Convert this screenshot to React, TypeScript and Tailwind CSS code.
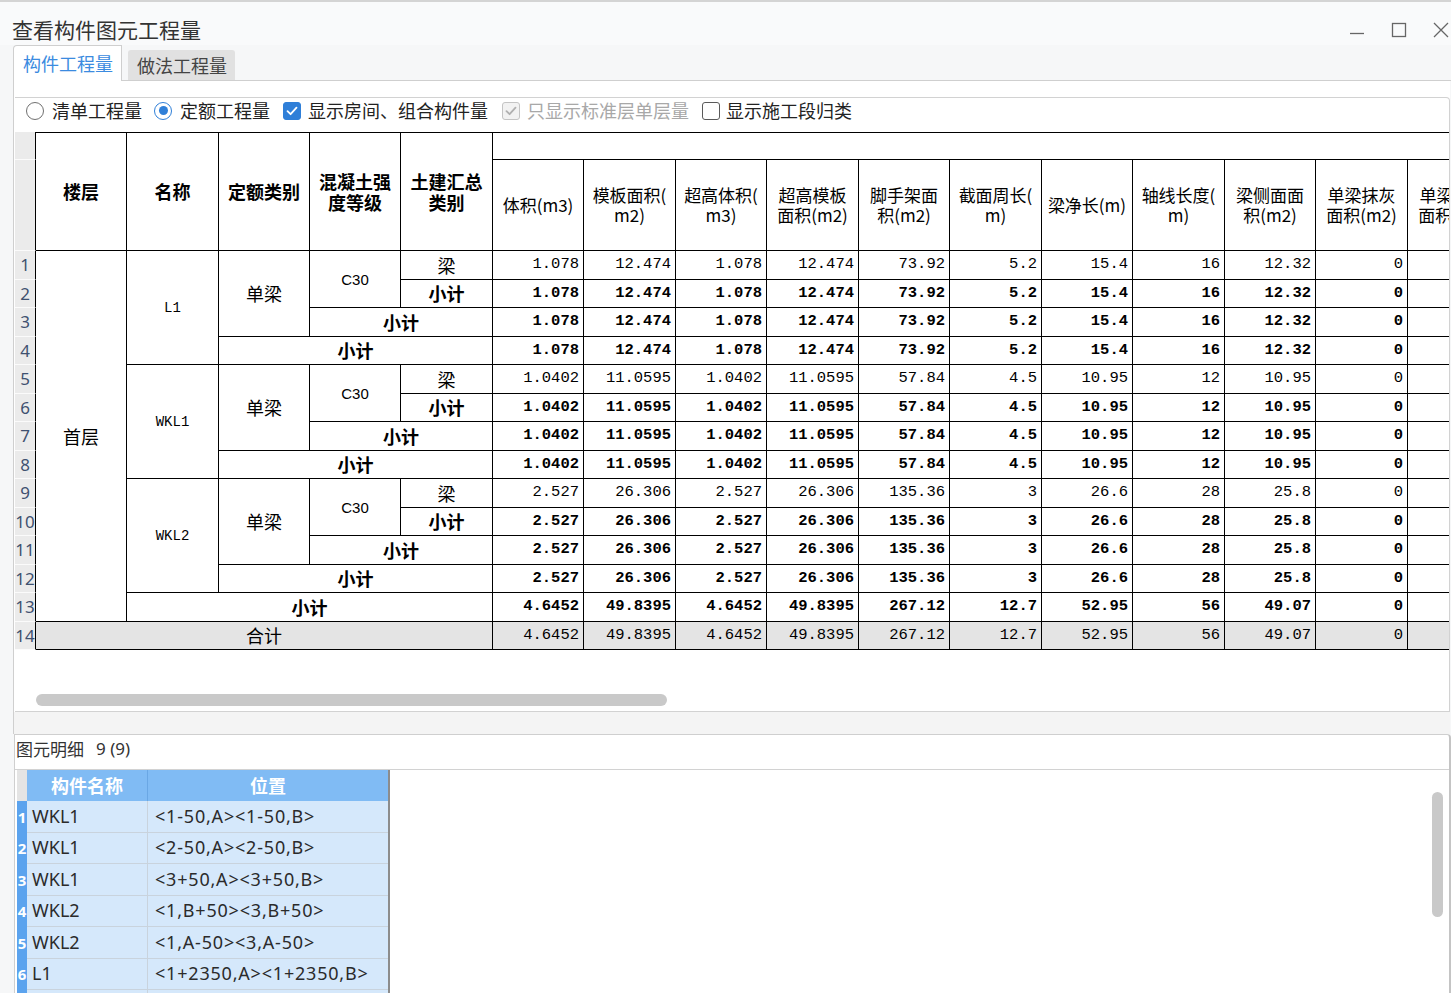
import React from 'react';

type Group = { name: string; vals: string[] };

const groups: Group[] = [
  { name: 'L1', vals: ['1.078', '12.474', '1.078', '12.474', '73.92', '5.2', '15.4', '16', '12.32', '0'] },
  { name: 'WKL1', vals: ['1.0402', '11.0595', '1.0402', '11.0595', '57.84', '4.5', '10.95', '12', '10.95', '0'] },
  { name: 'WKL2', vals: ['2.527', '26.306', '2.527', '26.306', '135.36', '3', '26.6', '28', '25.8', '0'] },
];
const total = ['4.6452', '49.8395', '4.6452', '49.8395', '267.12', '12.7', '52.95', '56', '49.07', '0'];

const colW = [
  'w-[21px]', 'w-[91px]', 'w-[92px]', 'w-[91px]', 'w-[91px]', 'w-[92px]', 'w-[91px]', 'w-[92px]', 'w-[91px]',
  'w-[92px]', 'w-[91px]', 'w-[92px]', 'w-[91px]', 'w-[92px]', 'w-[91px]', 'w-[92px]', 'w-[92px]',
];

const qtyHeaders: string[][] = [
  ['体积(m3)'],
  ['模板面积(', 'm2)'],
  ['超高体积(', 'm3)'],
  ['超高模板', '面积(m2)'],
  ['脚手架面', '积(m2)'],
  ['截面周长(', 'm)'],
  ['梁净长(m)'],
  ['轴线长度(', 'm)'],
  ['梁侧面面', '积(m2)'],
  ['单梁抹灰', '面积(m2)'],
  ['单梁模板', '面积(m2)'],
];

const details = [
  ['WKL1', '<1-50,A><1-50,B>'],
  ['WKL1', '<2-50,A><2-50,B>'],
  ['WKL1', '<3+50,A><3+50,B>'],
  ['WKL2', '<1,B+50><3,B+50>'],
  ['WKL2', '<1,A-50><3,A-50>'],
  ['L1', '<1+2350,A><1+2350,B>'],
  ['L1', '<2+2350,A><2+2350,B>'],
  ['KL1', '<1,A><1,B>'],
  ['KL1', '<3,A><3,B>'],
];

const cell = 'border-r border-b border-black p-0 text-center align-middle';
const rowHead =
  "bg-[#ebebeb] border-r border-r-black border-b border-b-[#fbfbfb] p-0 text-center align-middle text-[17px] text-[#3f5170] font-['Noto_Sans',sans-serif]";
const numCls = "border-r border-b border-black p-0 pr-[4px] text-right align-middle font-['Liberation_Mono',monospace] text-[15.5px]";
const xj = 'font-bold text-[18px]';

function Nums({ vals, bold }: { vals: string[]; bold?: boolean }) {
  return (
    <>
      {vals.map((v, i) => (
        <td key={i} className={`${numCls} ${bold ? 'font-bold' : ''}`}>
          {v}
        </td>
      ))}
      <td className={numCls}></td>
    </>
  );
}

function Radio({ checked }: { checked?: boolean }) {
  return (
    <span
      className={`flex h-[18px] w-[18px] items-center justify-center rounded-full border bg-white ${
        checked ? 'border-[#2f7fd8]' : 'border-[#707070]'
      }`}
    >
      {checked && <span className="h-[9px] w-[9px] rounded-full bg-[#2f7fd8]" />}
    </span>
  );
}

function Check({ state }: { state: 'on' | 'off' | 'disabled' }) {
  const box =
    state === 'on'
      ? 'bg-[#2f7fd8] border-[#2f7fd8]'
      : state === 'disabled'
      ? 'bg-[#f2f2f2] border-[#c4c4c4]'
      : 'bg-white border-[#5a5a5a]';
  return (
    <span className={`flex h-[18px] w-[18px] items-center justify-center rounded-[3px] border ${box}`}>
      {state !== 'off' && (
        <svg width="14" height="14" viewBox="0 0 14 14" fill="none">
          <path
            d="M2.5 7.2 L5.6 10.2 L11.5 3.6"
            stroke={state === 'on' ? '#ffffff' : '#b0b0b0'}
            strokeWidth="1.8"
            strokeLinecap="round"
            strokeLinejoin="round"
          />
        </svg>
      )}
    </span>
  );
}

export default function App() {
  return (
    <div className="relative h-[993px] w-[1451px] overflow-hidden border-t-2 border-[#d4d4d4] bg-[#f6f7f8] font-['Noto_Sans_CJK_SC',sans-serif] text-[#222]">
      {/* title bar */}
      <div className="flex h-[43px] items-center justify-between bg-[#f9fafb] pl-[12px] pr-[2px] pt-[12px]">
        <span className="text-[21px] leading-none text-[#333]">查看构件图元工程量</span>
        <div className="flex items-center gap-[26px] text-[#555]">
          <svg width="16" height="16" viewBox="0 0 16 16">
            <path d="M1 11.5 H15" stroke="#666" strokeWidth="1.3" />
          </svg>
          <svg width="16" height="16" viewBox="0 0 16 16">
            <rect x="1.5" y="1.5" width="13" height="13" fill="none" stroke="#666" strokeWidth="1.3" />
          </svg>
          <svg width="16" height="16" viewBox="0 0 16 16">
            <path d="M1 1 L15 15 M15 1 L1 15" stroke="#666" strokeWidth="1.3" />
          </svg>
        </div>
      </div>

      {/* tabs */}
      <div className="flex h-[36px] items-end pl-[13px]">
        <div className="flex h-[36px] w-[109px] items-center rounded-tl-[4px] border border-b-0 border-[#cfcfcf] bg-white pl-[9px] text-[18px] text-[#3b8be0]">
          构件工程量
        </div>
        <div className="h-[36px] w-[6px] border-b border-[#cfcfcf]" />
        <div className="flex h-[31px] w-[107px] items-center rounded-t-[3px] border-b border-[#cfcfcf] bg-[#e1e1e1] pl-[9px] text-[18px] text-[#444]">
          做法工程量
        </div>
        <div className="h-[36px] flex-1 border-b border-[#cfcfcf]" />
      </div>

      {/* upper panel */}
      <div className="ml-[13px] mr-[1px] border-l border-[#cfcfcf] bg-white pt-[16px]">
        <div className="ml-[1px] overflow-hidden rounded-tr-[4px] border-b border-r border-t border-[#d2d2d2] bg-white">
          <div className="flex h-[34px] items-center pb-[9px] pl-[11px] text-[18px]">
            <Radio />
            <span className="ml-[8px]">清单工程量</span>
            <span className="ml-[12px]"><Radio checked /></span>
            <span className="ml-[8px]">定额工程量</span>
            <span className="ml-[13px]"><Check state="on" /></span>
            <span className="ml-[7px]">显示房间、组合构件量</span>
            <span className="ml-[14px]"><Check state="disabled" /></span>
            <span className="ml-[7px] text-[#a8a8a8]">只显示标准层单层量</span>
            <span className="ml-[13px]"><Check state="off" /></span>
            <span className="ml-[6px]">显示施工段归类</span>
          </div>

          <div className="w-[1434px] overflow-hidden">
            <table className="w-[1485px] table-fixed border-separate border-spacing-0 text-black">
              <colgroup>
                {colW.map((w, i) => (
                  <col key={i} className={w} />
                ))}
              </colgroup>
              <thead>
                <tr className="h-[28px]">
                  <td className={rowHead}></td>
                  {['楼层', '名称', '定额类别', ['混凝土强', '度等级'], ['土建汇总', '类别']].map((h, i) => (
                    <td
                      key={i}
                      rowSpan={2}
                      className={`${cell} border-t text-[18px] font-bold leading-[21px]`}
                    >
                      {Array.isArray(h) ? (
                        <>
                          {h[0]}
                          <br />
                          {h[1]}
                        </>
                      ) : (
                        h
                      )}
                    </td>
                  ))}
                  <td colSpan={11} className={`${cell} border-t`}></td>
                </tr>
                <tr className="h-[91px]">
                  <td className={rowHead}></td>
                  {qtyHeaders.map((h, i) => (
                    <td key={i} className={`${cell} text-[17px] leading-[20px]`}>
                      {h.map((line, j) => (
                        <div key={j}>{line}</div>
                      ))}
                    </td>
                  ))}
                </tr>
              </thead>
              <tbody className="text-[18px] leading-none">
                {groups.map((g, gi) => {
                  const base = gi * 4;
                  return (
                    <React.Fragment key={g.name}>
                      <tr className="h-[28.5px]">
                        <td className={rowHead}>{base + 1}</td>
                        {gi === 0 && (
                          <td rowSpan={13} className={cell}>
                            首层
                          </td>
                        )}
                        <td rowSpan={4} className={`${cell} font-['Liberation_Mono',monospace] text-[14px]`}>
                          {g.name}
                        </td>
                        <td rowSpan={3} className={cell}>
                          单梁
                        </td>
                        <td rowSpan={2} className={`${cell} font-['Liberation_Sans',sans-serif] text-[15px]`}>
                          C30
                        </td>
                        <td className={cell}>梁</td>
                        <Nums vals={g.vals} />
                      </tr>
                      <tr className="h-[28.5px]">
                        <td className={rowHead}>{base + 2}</td>
                        <td className={`${cell} ${xj}`}>小计</td>
                        <Nums vals={g.vals} bold />
                      </tr>
                      <tr className="h-[28.5px]">
                        <td className={rowHead}>{base + 3}</td>
                        <td colSpan={2} className={`${cell} ${xj}`}>
                          小计
                        </td>
                        <Nums vals={g.vals} bold />
                      </tr>
                      <tr className="h-[28.5px]">
                        <td className={rowHead}>{base + 4}</td>
                        <td colSpan={3} className={`${cell} ${xj}`}>
                          小计
                        </td>
                        <Nums vals={g.vals} bold />
                      </tr>
                    </React.Fragment>
                  );
                })}
                <tr className="h-[28.5px]">
                  <td className={rowHead}>13</td>
                  <td colSpan={4} className={`${cell} ${xj}`}>
                    小计
                  </td>
                  <Nums vals={total} bold />
                </tr>
                <tr className="h-[28.5px] bg-[#e4e4e4]">
                  <td className={rowHead}>14</td>
                  <td colSpan={5} className={cell}>
                    合计
                  </td>
                  <Nums vals={total} />
                </tr>
              </tbody>
            </table>
          </div>

          <div className="h-[61px] pt-[44px]">
            <div className="ml-[21px] h-[12px] w-[631px] rounded-full bg-[#c9c9c9]" />
          </div>
        </div>
      </div>

      {/* gap strip */}
      <div className="ml-[13px] mr-[1px] h-[22px] border-l border-[#cfcfcf] bg-[#f4f4f4]" />

      {/* lower panel */}
      <div className="relative ml-[14px] h-[260px] overflow-hidden rounded-tr-[4px] border-l border-t border-r-[2px] border-[#cfcfcf] border-r-[#c4c4c4] bg-white">
        <div className="flex h-[35px] items-center border-b border-[#d2d2d2] pb-[7px] pl-[1px] text-[17px] text-[#333]">
          图元明细 <span className="ml-[12px] font-['Noto_Sans',sans-serif]">9 (9)</span>
        </div>
        <div className="ml-[2px] w-[373px] border-r-[2px] border-[#8c8c8c]">
          <div className="flex h-[31px] text-[18px] font-bold text-white">
            <div className="w-[10px] bg-[#e4e4e4]" />
            <div className="flex w-[121px] items-center justify-center border-r border-[#6aa7e4] bg-[#80bbf4]">构件名称</div>
            <div className="flex flex-1 items-center justify-center bg-[#80bbf4]">位置</div>
          </div>
          {details.map((d, i) => (
            <div key={i} className="flex h-[31.5px] font-['Noto_Sans','Noto_Sans_CJK_SC',sans-serif] text-[18px] text-[#2b2b2b]">
              <div className="flex w-[10px] items-center justify-center bg-[#5ba3ee] text-[15px] font-bold text-white">
                {i + 1}
              </div>
              <div className="flex w-[121px] items-center border-b border-r border-[#c9d3dd] bg-[#d5e8fb] pl-[5px]">
                {d[0]}
              </div>
              <div className="flex flex-1 items-center border-b border-[#c9d3dd] bg-[#d5e8fb] pl-[7px] tracking-[0.8px]">
                {d[1]}
              </div>
            </div>
          ))}
        </div>
        <div className="absolute right-[6px] top-[57px] h-[125px] w-[11px] rounded-full bg-[#c9c9c9]" />
      </div>
    </div>
  );
}
